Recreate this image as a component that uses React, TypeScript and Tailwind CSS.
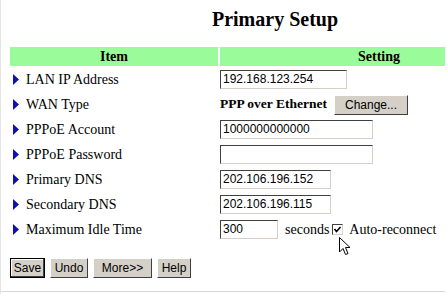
import React from 'react';

const serif = { fontFamily: '"Liberation Serif", "Times New Roman", serif' };
const sans = { fontFamily: '"Liberation Sans", Arial, sans-serif' };

function Arrow() {
  return (
    <svg width="6" height="11" viewBox="0 0 6 11" className="mr-[7px] shrink-0">
      <polygon points="0,0 6,5.5 0,11" fill="#1010b0" />
    </svg>
  );
}

function TextBox({ value, w }: { value: string; w: string }) {
  return (
    <div
      className={`${w} h-[19px] border border-t-[#404040] border-l-[#404040] border-r-[#d4d0c8] border-b-[#d4d0c8] bg-white pl-[2px] text-[12px] leading-[17px] text-black`}
      style={sans}
    >
      {value}
    </div>
  );
}

function Btn({ label, w, isDefault }: { label: string; w: string; isDefault?: boolean }) {
  return (
    <div
      className={`${w} h-[20px] flex items-center justify-center bg-[#d4d0c8] text-[12px] text-black ${
        isDefault
          ? 'border border-black shadow-[inset_-1px_-1px_0_#404040,inset_1px_1px_0_#ffffff]'
          : 'border border-t-white border-l-white border-r-[#404040] border-b-[#404040]'
      }`}
      style={sans}
    >
      {label}
    </div>
  );
}

const rows: { label: string; cell: React.ReactNode }[] = [
  { label: 'LAN IP Address', cell: <TextBox value="192.168.123.254" w="w-[127px]" /> },
  {
    label: 'WAN Type',
    cell: (
      <div className="flex items-center">
        <span className="font-bold text-[13.5px] w-[114px]" style={serif}>
          PPP over Ethernet
        </span>
        <Btn label="Change..." w="w-[74px]" />
      </div>
    ),
  },
  { label: 'PPPoE Account', cell: <TextBox value="1000000000000" w="w-[153px]" /> },
  { label: 'PPPoE Password', cell: <TextBox value="" w="w-[153px]" /> },
  { label: 'Primary DNS', cell: <TextBox value="202.106.196.152" w="w-[111px]" /> },
  { label: 'Secondary DNS', cell: <TextBox value="202.106.196.115" w="w-[111px]" /> },
  {
    label: 'Maximum Idle Time',
    cell: (
      <div className="flex items-center text-[14px]" style={serif}>
        <TextBox value="300" w="w-[58px]" />
        <span className="ml-[7px]">seconds</span>
        <div className="relative ml-[3px] w-[11px] h-[11px] border border-t-[#404040] border-l-[#404040] border-r-[#d4d0c8] border-b-[#d4d0c8] bg-white">
          <svg width="9" height="9" viewBox="0 0 9 9" className="absolute left-0 top-0">
            <polyline points="1.5,4 3.5,6.5 7.5,2" fill="none" stroke="#000" strokeWidth="1.6" />
          </svg>
          <svg width="12" height="19" viewBox="0 0 12 19" className="absolute left-[6px] top-[12px]">
            <polygon
              points="0.5,0.5 0.5,15 4,11.5 6.5,17.5 9,16.5 6.5,10.5 11,10.5"
              fill="#fff"
              stroke="#000"
              strokeWidth="1"
            />
          </svg>
        </div>
        <span className="ml-[6px]">Auto-reconnect</span>
      </div>
    ),
  },
];

export default function App() {
  return (
    <div
      className="w-[447px] h-[294px] overflow-hidden bg-white text-black border-l border-l-[#e4e4e4]"
      style={serif}
    >
      <div className="w-[444px] h-[292px] overflow-hidden border-b border-b-[#d6d6d6]">
        <div className="w-[540px] pl-[9px] pt-[5px]">
          <h1 className="w-[530px] text-center font-bold text-[20px] leading-[28px]" style={serif}>
            Primary Setup
          </h1>
          <div className="mt-[14px] flex gap-[2px] h-[19px]">
            <div
              className="w-[208px] bg-[#99fb99] flex items-center justify-center font-bold text-[14px]"
              style={serif}
            >
              Item
            </div>
            <div
              className="w-[318px] bg-[#99fb99] flex items-center justify-center font-bold text-[14px]"
              style={serif}
            >
              Setting
            </div>
          </div>
          <div className="mt-[1px] flex flex-col">
            {rows.map((r) => (
              <div key={r.label} className="flex h-[25px] items-center gap-[2px]">
                <div className="w-[208px] flex items-center pl-[3px] text-[14px]" style={serif}>
                  <Arrow />
                  {r.label}
                </div>
                <div className="w-[318px]">{r.cell}</div>
              </div>
            ))}
          </div>
          <div className="mt-[16px] flex gap-[5px]">
            <Btn label="Save" w="w-[35px]" isDefault />
            <Btn label="Undo" w="w-[38px]" />
            <Btn label="More>>" w="w-[59px]" />
            <Btn label="Help" w="w-[34px]" />
          </div>
        </div>
      </div>
    </div>
  );
}
